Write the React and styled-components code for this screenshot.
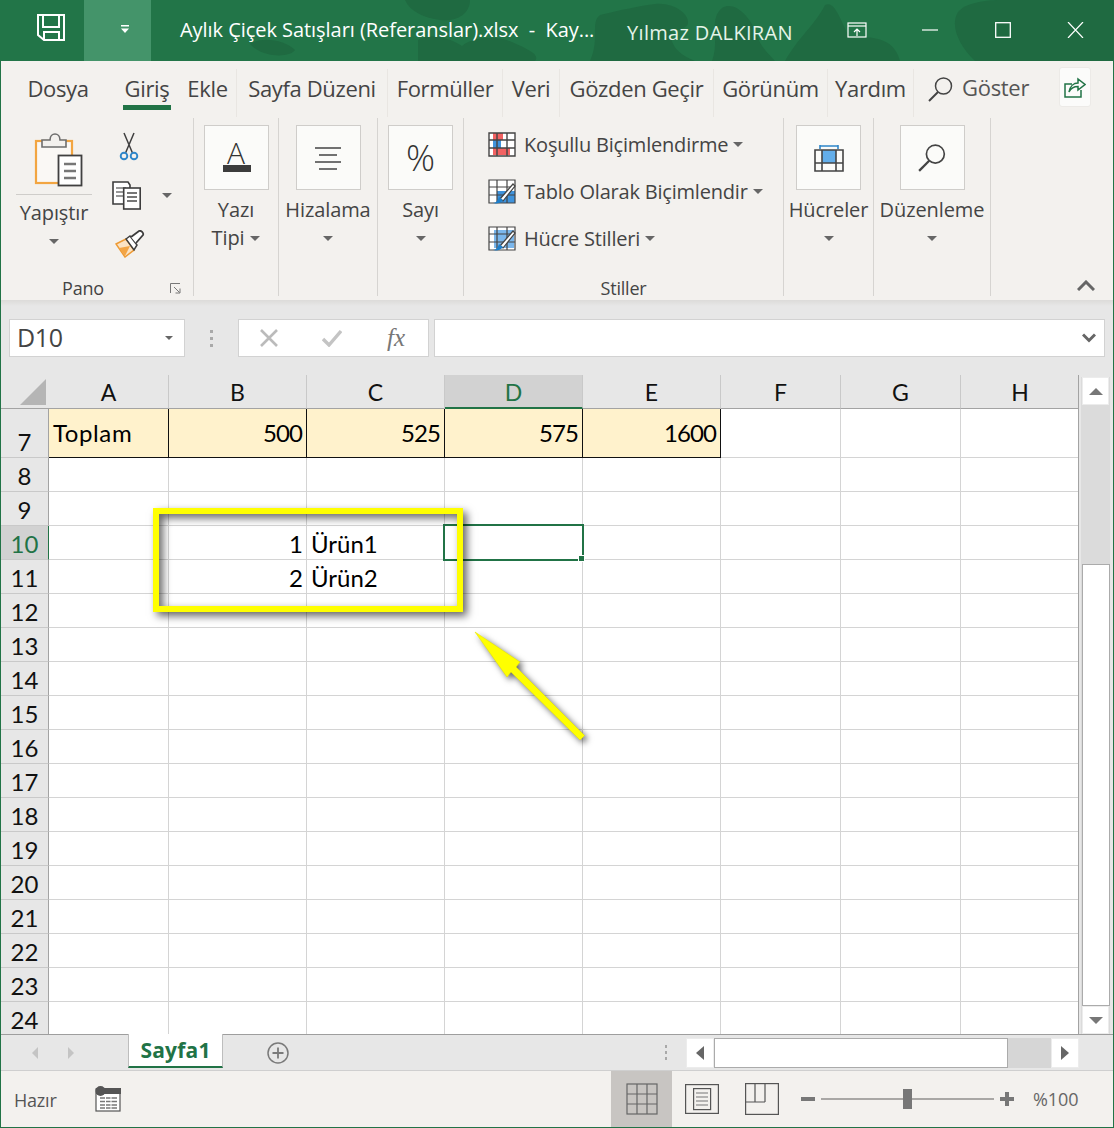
import React from "react";
import styled, { createGlobalStyle } from "styled-components";

const GREEN = "#217346";
const RIBBON = "#f3f1ee";
const UI_FONT = `"Open Sans", "Noto Sans", sans-serif`;
const CELL_FONT = `Lato, "Noto Sans", sans-serif`;

const GlobalStyle = createGlobalStyle`
  html, body {
    margin: 0;
    padding: 0;
    background: #fff;
  }
  * {
    box-sizing: border-box;
  }
`;

const Window = styled.div`
  width: 1114px;
  height: 1128px;
  overflow: hidden;
  font-family: ${UI_FONT};
  color: #444;
`;

/* ---------- title bar ---------- */

const TitleBarRoot = styled.header`
  position: relative;
  height: 61px;
  display: flex;
  align-items: center;
  background: #227548;
  color: #fff;
`;

const TitleClouds = styled.svg`
  position: absolute;
  inset: 0;
  width: 1114px;
  height: 61px;
`;

const SaveButton = styled.div`
  position: relative;
  flex: none;
  width: 84px;
  height: 61px;
  display: flex;
  align-items: center;
  justify-content: center;
  padding: 0 0 6px 18px;
`;

const QuickMenu = styled.div`
  position: relative;
  flex: none;
  width: 67px;
  height: 61px;
  display: flex;
  align-items: center;
  justify-content: center;
  padding: 0 0 2px 15px;
  background: #44946a;
`;

const DocTitle = styled.div`
  position: relative;
  flex: none;
  margin-left: 29px;
  width: 447px;
  font-size: 20px;
  letter-spacing: -0.05px;
  white-space: pre;
  padding-bottom: 2px;
`;

const UserName = styled.div`
  position: relative;
  flex: none;
  width: 204px;
  padding-top: 4px;
  font-size: 20px;
  letter-spacing: 0.33px;
  color: #e4f4e9;
  white-space: nowrap;
`;

const WinButton = styled.div`
  position: relative;
  flex: none;
  width: ${props => props.$w}px;
  display: flex;
  justify-content: center;
  padding: 0 0 2px ${props => props.$pad || 0}px;
`;

/* ---------- tabs ---------- */

const Chrome = styled.div`
  height: 1067px;
  display: flex;
  flex-direction: column;
  border: 1px solid ${GREEN};
  border-top: 0;
`;

const TabRow = styled.nav`
  height: 57px;
  display: flex;
  align-items: flex-start;
  background: ${RIBBON};
`;

const TabItem = styled.div`
  position: relative;
  flex: none;
  width: ${props => props.$w}px;
  height: 48px;
  margin-top: 8px;
  padding-top: 2px;
  display: flex;
  justify-content: center;
  font-size: 22px;
  line-height: 34px;
  letter-spacing: -0.35px;
  white-space: nowrap;
  ${props => props.$sep && "border-right: 1px solid #e9e6e2;"}
`;

const TabUnderline = styled.div`
  position: absolute;
  left: 50%;
  bottom: 7px;
  width: 48px;
  height: 5px;
  margin-left: -24px;
  background: ${GREEN};
`;

const SearchTab = styled.div`
  flex: none;
  width: 143px;
  height: 48px;
  margin-top: 9px;
  padding-left: 14px;
  display: flex;
  align-items: flex-start;
  gap: 9px;
  font-size: 22px;
  line-height: 34px;
  letter-spacing: -0.3px;
  color: #555;
  svg {
    margin-top: 7px;
  }
`;

const ShareButton = styled.div`
  flex: none;
  width: 32px;
  height: 40px;
  margin-top: 6px;
  margin-left: 2px;
  display: flex;
  align-items: center;
  justify-content: center;
  background: #fbfbfa;
  border: 1px solid #eceae7;
  border-radius: 3px;
`;

/* ---------- ribbon ---------- */

const Ribbon = styled.section`
  position: relative;
  height: 182px;
  display: flex;
  align-items: flex-start;
  background: ${RIBBON};
`;

const Group = styled.div`
  flex: none;
  width: ${props => props.$w}px;
  height: 178px;
  display: flex;
  flex-direction: column;
  align-items: center;
  border-right: 1px solid #d6d4d1;
`;

const BigButton = styled.div`
  position: relative;
  width: 65px;
  height: 65px;
  margin-top: 7px;
  display: flex;
  align-items: center;
  justify-content: center;
  background: #fbfbf9;
  border: 1px solid #cfcdca;
`;

const RibbonLabel = styled.div`
  height: 28px;
  display: flex;
  align-items: center;
  gap: 6px;
  font-size: 20px;
  line-height: 28px;
  letter-spacing: -0.1px;
  white-space: nowrap;
  margin-top: ${props => props.$top || 0}px;
`;

const Caret = styled.span`
  display: inline-block;
  width: 0;
  height: 0;
  border-left: ${props => props.$s || 5}px solid transparent;
  border-right: ${props => props.$s || 5}px solid transparent;
  border-top: ${props => props.$s || 5}px solid #666;
`;

const CaretRow = styled.div`
  height: 28px;
  display: flex;
  align-items: center;
  justify-content: center;
`;

const GroupFooter = styled.div`
  margin-top: auto;
  width: 100%;
  height: 16px;
  display: flex;
  align-items: center;
  justify-content: ${props => (props.$start ? "flex-start" : "center")};
  font-size: 18px;
  letter-spacing: -0.2px;
  line-height: 16px;
`;

const ClipBody = styled.div`
  width: 100%;
  display: flex;
`;

const PasteColumn = styled.div`
  width: 76px;
  margin-left: 15px;
  display: flex;
  flex-direction: column;
  align-items: center;
  padding-top: 15px;
  > svg {
    margin-left: 7px;
  }
`;

const PasteDivider = styled.div`
  width: 76px;
  height: 1px;
  margin-top: 7px;
  background: #cfcdca;
`;

const ClipTools = styled.div`
  margin-left: 20px;
  padding-top: 14px;
  display: flex;
  flex-direction: column;
`;

const ClipTool = styled.div`
  height: ${props => props.$h}px;
  display: flex;
  align-items: flex-start;
  gap: 21px;
  padding-left: ${props => props.$pad || 0}px;
  ${Caret} {
    margin-top: 12px;
  }
`;

const PanoLabel = styled.span`
  width: 164px;
  text-align: center;
`;

const Launcher = styled.svg`
  margin-left: 5px;
`;

const StylesBody = styled.div`
  width: 100%;
  padding: 11px 0 0 24px;
  display: flex;
  flex-direction: column;
  gap: 17px;
`;

const StyleRow = styled.div`
  height: 30px;
  display: flex;
  align-items: center;
  gap: 8px;
  font-size: 20px;
  letter-spacing: -0.2px;
  white-space: nowrap;
  ${Caret} {
    margin-left: -3px;
  }
`;

const Collapse = styled.svg`
  position: absolute;
  right: 18px;
  bottom: 9px;
`;

const FontA = styled.span`
  font-size: 30px;
  line-height: 30px;
  margin-top: -10px;
  font-weight: 300;
  color: #333;
`;

const FontBar = styled.span`
  position: absolute;
  left: 18px;
  top: 39px;
  width: 28px;
  height: 7px;
  background: #3c3c3c;
`;

const Percent = styled.span`
  font-size: 36px;
  font-weight: 300;
  line-height: 36px;
  color: #333;
`;

/* ---------- formula bar ---------- */

const FormulaBar = styled.section`
  height: 75px;
  padding: 19px 8px 0 8px;
  display: flex;
  align-items: flex-start;
  background: linear-gradient(#dcdbd9, #e7e7e7 6px);
`;

const FieldBox = styled.div`
  width: ${props => props.$w ? `${props.$w}px` : "auto"};
  flex: ${props => props.$w ? "none" : 1};
  height: 38px;
  display: flex;
  align-items: center;
  background: #fff;
  border: 1px solid #d2d2d2;
  font-size: 25px;
  color: #444;
`;

const NameText = styled.span`
  flex: 1;
  padding: 0 0 2px 7px;
  letter-spacing: -0.4px;
`;

const GripDots = styled.div`
  width: 53px;
  display: flex;
  flex-direction: column;
  align-items: center;
  justify-content: center;
  gap: 4px;
  height: ${props => props.$h || 38}px;
  span {
    width: 3px;
    height: 3px;
    background: #a9a9a9;
  }
`;

const FxGroup = styled(FieldBox)`
  margin-right: 5px;
  justify-content: flex-start;
  padding-left: 21px;
  gap: 44px;
`;

const FxText = styled.span`
  font-family: "Liberation Serif", serif;
  font-style: italic;
  font-size: 25px;
  color: #777;
  margin-left: 1px;
`;

const ChevronWrap = styled.div`
  margin-left: auto;
  padding-right: 8px;
  display: flex;
`;

/* ---------- sheet ---------- */

const SheetArea = styled.section`
  position: relative;
  height: 659px;
  display: flex;
  background: #e7e7e7;
`;

const Grid = styled.div`
  flex: none;
  width: 1078px;
  display: flex;
  flex-direction: column;
  overflow: hidden;
  border-right: 1px solid #a3a3a3;
`;

const HeaderRow = styled.div`
  height: 34px;
  flex: none;
  display: flex;
  background: #e7e7e7;
`;

const Corner = styled.div`
  flex: none;
  width: 48px;
  display: flex;
  align-items: flex-end;
  justify-content: flex-end;
  padding: 0 3px 3px 0;
  border-bottom: 1px solid #a3a3a3;
`;

const ColHead = styled.div`
  flex: none;
  width: ${props => props.$w}px;
  height: 34px;
  padding-top: 1px;
  display: flex;
  align-items: center;
  justify-content: center;
  font-family: ${CELL_FONT};
  font-size: 23px;
  border-right: 1px solid #c9c9c9;
  color: ${props => (props.$active ? GREEN : "#111")};
  background: ${props => (props.$active ? "#d2d2d2" : "transparent")};
  border-bottom: ${props => (props.$active ? `2px solid ${GREEN}` : "1px solid #a3a3a3")};
  &:last-child {
    border-right: 0;
  }
`;

const Row = styled.div`
  height: ${props => props.$h}px;
  flex: none;
  display: flex;
`;

const RowHead = styled.div`
  flex: none;
  width: 48px;
  display: flex;
  align-items: flex-end;
  justify-content: center;
  font-family: ${CELL_FONT};
  font-size: 24px;
  line-height: 31px;
  color: ${props => (props.$active ? GREEN : "#111")};
  background: ${props => (props.$active ? "#d2d2d2" : "#e7e7e7")};
  border-bottom: 1px solid #c9c9c9;
  border-right: 1px solid ${props => (props.$active ? GREEN : "#a3a3a3")};
`;

const Cell = styled.div`
  flex: none;
  width: ${props => props.$w}px;
  display: flex;
  align-items: center;
  font-family: ${CELL_FONT};
  font-size: 24px;
  color: #000;
  padding: ${props => (props.$total ? "0 4px 2px 4px" : "2px 4px 0 4px")};
  letter-spacing: ${props => (props.$right ? "-0.9px" : props.$total ? "0.6px" : "0")};
  background: ${props => (props.$total ? "#fff2cc" : "#fff")};
  justify-content: ${props => (props.$right ? "flex-end" : "flex-start")};
  border-right: 1px solid ${props => (props.$total ? "#111" : "#d4d4d4")};
  border-bottom: 1px solid ${props => (props.$total ? "#111" : "#d4d4d4")};
  &:last-child {
    border-right: 0;
  }
`;

const SelectionBox = styled.div`
  position: absolute;
  left: 442px;
  top: 149px;
  width: 141px;
  height: 37px;
  border: 2px solid ${GREEN};
`;

const FillHandle = styled.div`
  position: absolute;
  right: -3px;
  bottom: -3px;
  width: 7px;
  height: 7px;
  background: ${GREEN};
  border: 1px solid #fff;
`;

const CalloutFrame = styled.div`
  position: absolute;
  left: 152px;
  top: 133px;
  width: 310px;
  height: 104px;
  border: 6px solid #ffff00;
  box-shadow: 4px 4px 8px rgba(0, 0, 0, 0.6), inset 4px 4px 8px rgba(0, 0, 0, 0.6);
`;

const CalloutArrow = styled.svg`
  position: absolute;
  left: 469px;
  top: 250px;
  filter: drop-shadow(3px 3px 3px rgba(0, 0, 0, 0.6));
`;

const VScroll = styled.div`
  width: 29px;
  margin-left: 2px;
  margin-top: 2px;
  display: flex;
  flex-direction: column;
  background: #dbdbdb;
`;

const ScrollBtn = styled.div`
  height: ${props => props.$h}px;
  width: ${props => props.$w || 27}px;
  margin: 0 auto;
  flex: none;
  display: flex;
  align-items: center;
  justify-content: center;
  background: #fff;
  border: 1px solid #ececec;
`;

const ArrowUp = styled.span`
  width: 0;
  height: 0;
  border-left: 7px solid transparent;
  border-right: 7px solid transparent;
  border-bottom: 7px solid #777;
`;

const ArrowDown = styled.span`
  width: 0;
  height: 0;
  border-left: 7px solid transparent;
  border-right: 7px solid transparent;
  border-top: 7px solid #777;
`;

const VThumb = styled.div`
  height: 444px;
  margin-top: 159px;
  width: 28px;
  margin-left: auto;
  margin-right: auto;
  background: #fff;
  border: 1px solid #ababab;
`;

/* ---------- sheet tabs ---------- */

const TabBar = styled.section`
  height: 37px;
  display: flex;
  align-items: flex-start;
  padding-right: 34px;
  background: #e7e7e7;
  border-top: 1px solid #9e9e9e;
  border-bottom: 1px solid #cfcfcf;
`;

const SheetNav = styled.div`
  flex: none;
  width: 127px;
  height: 35px;
  padding-left: 31px;
  display: flex;
  align-items: center;
  gap: 30px;
`;

const NavLeft = styled.span`
  width: 0;
  height: 0;
  border-top: ${props => (props.$dark ? 7 : 6)}px solid transparent;
  border-bottom: ${props => (props.$dark ? 7 : 6)}px solid transparent;
  border-right: ${props => (props.$dark ? "8px solid #666" : "6px solid #c4c4c4")};
`;

const NavRight = styled.span`
  width: 0;
  height: 0;
  border-top: ${props => (props.$dark ? 7 : 6)}px solid transparent;
  border-bottom: ${props => (props.$dark ? 7 : 6)}px solid transparent;
  border-left: ${props => (props.$dark ? "8px solid #666" : "6px solid #c4c4c4")};
`;

const SheetTab = styled.div`
  flex: none;
  width: 95px;
  height: 34px;
  margin-top: -1px;
  padding-bottom: 1px;
  display: flex;
  align-items: center;
  justify-content: center;
  background: #fff;
  border-left: 1px solid #bdbdbd;
  border-right: 1px solid #bdbdbd;
  border-bottom: 2px solid ${GREEN};
  color: ${GREEN};
  font-size: 21px;
  font-weight: 700;
  letter-spacing: 0.2px;
`;

const AddSheet = styled.svg`
  flex: none;
  margin-left: 44px;
  margin-top: 7px;
`;

const TabGrip = styled(GripDots)`
  margin-left: auto;
  width: 41px;
  gap: 3px;
  height: 35px;
  margin-right: 0;
  span {
    width: 2px;
    height: 3px;
  }
`;

const HScroll = styled.div`
  flex: none;
  width: 393px;
  height: 30px;
  margin-top: 3px;
  display: flex;
  background: #d6d6d6;
`;

const HThumb = styled.div`
  width: 294px;
  background: #fff;
  border: 1px solid #ababab;
`;

const HSpacer = styled.div`
  flex: 1;
`;

/* ---------- status bar ---------- */

const StatusBar = styled.footer`
  height: 56px;
  display: flex;
  align-items: center;
  background: ${RIBBON};
  font-size: 18px;
  color: #555;
`;

const StatusText = styled.span`
  margin-left: 13px;
  width: 81px;
  padding-top: 2px;
  letter-spacing: -0.2px;
`;

const ViewButton = styled.div`
  flex: none;
  width: ${props => props.$w}px;
  height: 56px;
  display: flex;
  align-items: center;
  justify-content: center;
  background: ${props => (props.$on ? "#c8c5c2" : "transparent")};
`;

const StatusSpacer = styled.div`
  flex: none;
  width: ${props => props.$w}px;
`;

const ZoomControl = styled.div`
  margin-left: 9px;
  display: flex;
  align-items: center;
  gap: 6px;
`;

const ZoomSign = styled.span`
  position: relative;
  width: 14px;
  height: 14px;
  &::before {
    content: "";
    position: absolute;
    left: 0;
    right: 0;
    top: 5px;
    height: 4px;
    background: #777;
  }
  ${props => props.$plus && `
    &::after {
      content: "";
      position: absolute;
      top: 0;
      bottom: 0;
      left: 5px;
      width: 4px;
      background: #777;
    }
  `}
`;

const ZoomTrack = styled.div`
  position: relative;
  width: 173px;
  height: 2px;
  background: #a9a7a5;
`;

const ZoomThumb = styled.div`
  position: absolute;
  left: 82px;
  top: -9px;
  width: 9px;
  height: 20px;
  background: #777;
`;

const ZoomValue = styled.span`
  margin-left: 19px;
  font-size: 18px;
  letter-spacing: -0.1px;
  color: #666;
`;

/* ---------- icons ---------- */

const SaveIcon = () => (
  <svg width="30" height="30" viewBox="0 0 30 30" fill="none" stroke="#fff" strokeWidth="2">
    <path d="M2 2H28V27H8L2 22Z" />
    <path d="M7 2V14H23V2" />
    <path d="M8 27V19H23V27" />
  </svg>
);

const QuickCaret = () => (
  <svg width="10" height="9" viewBox="0 0 10 9" fill="#fff">
    <rect x="1" y="0" width="8" height="1.5" />
    <path d="M1 3.5H9L5 8Z" />
  </svg>
);

const Clouds = () => (
  <TitleClouds viewBox="0 0 1114 61" fill="#1f6a41">
    <path d="M405 0C410 12 425 18 440 20C455 22 470 15 470 0Z" />
    <path d="M250 44C262 36 285 40 295 50C290 58 262 58 250 44Z" />
    <path d="M418 61V40C430 32 450 38 462 46C470 38 495 34 512 42C530 50 540 55 535 61Z" />
    <path d="M590 61C600 40 590 22 600 15C620 10 640 6 655 4C675 2 690 15 688 24C685 30 675 30 672 30C668 45 680 55 695 61Z" />
    <path d="M712 61C720 40 708 20 722 8C735 0 750 18 755 30C760 48 770 55 775 61Z" />
    <path d="M785 61C800 35 815 25 825 5C835 0 840 20 850 38C880 35 895 42 900 61Z" />
    <path d="M1000 0H1114V61H975C958 45 950 25 958 12C965 3 985 0 1000 0Z" />
  </TitleClouds>
);

const RibbonDisplayIcon = () => (
  <svg width="20" height="16" viewBox="0 0 20 16" fill="none" stroke="#fff" strokeWidth="1.2">
    <rect x="1" y="1" width="18" height="14" />
    <path d="M1 4H19" />
    <path d="M10 14V7M7 10L10 7L13 10" />
  </svg>
);

const MinimizeIcon = () => (
  <svg width="16" height="16" viewBox="0 0 16 16" stroke="#fff" strokeWidth="1.2">
    <path d="M0 8H16" />
  </svg>
);

const MaximizeIcon = () => (
  <svg width="16" height="16" viewBox="0 0 16 16" fill="none" stroke="#fff" strokeWidth="1.3">
    <rect x="0.7" y="0.7" width="14.6" height="14.6" />
  </svg>
);

const CloseIcon = () => (
  <svg width="17" height="16" viewBox="0 0 17 16" stroke="#fff" strokeWidth="1.2">
    <path d="M1 0L16 16M16 0L1 16" />
  </svg>
);

const SearchIcon = ({ size = 25, color = "#444" }) => (
  <svg width={size} height={size} viewBox="0 0 25 25" fill="none" stroke={color} strokeWidth="1.5">
    <circle cx="15.5" cy="9" r="8" />
    <path d="M10 15L1 24" strokeWidth="2" />
  </svg>
);

const ShareIcon = () => (
  <svg width="22" height="22" viewBox="0 0 22 22" fill="none" stroke={GREEN} strokeWidth="1.5">
    <path d="M8 8H1V21H17V14" />
    <path d="M5 16C6 10 10 7 14 7V3L21 8.5L14 14V10.5C10 10.5 7 12 5 16Z" fill="#fbfbfa" />
  </svg>
);

const PasteIcon = () => (
  <svg width="50" height="54" viewBox="0 0 50 54">
    <rect x="3" y="8" width="36" height="42" fill="#faf8f5" stroke="#f2a541" strokeWidth="2.2" />
    <path d="M9 14V7H17C17 -1 27 -1 27 7H33V14Z" fill="#f3f1ee" stroke="#6d6d6d" strokeWidth="1.6" />
    <rect x="25.5" y="22.5" width="23" height="30" fill="#fff" stroke="#404040" strokeWidth="1.8" />
    <path d="M31 31H43M31 38H43M31 45H43" stroke="#777" strokeWidth="2.4" />
  </svg>
);

const ScissorsIcon = () => (
  <svg width="20" height="29" viewBox="0 0 20 29" fill="none">
    <path d="M5 1L13.5 21M15 1L6.5 21" stroke="#3f3f3f" strokeWidth="1.5" />
    <circle cx="5" cy="24" r="3.3" stroke="#2f86c9" strokeWidth="1.9" />
    <circle cx="15" cy="24" r="3.3" stroke="#2f86c9" strokeWidth="1.9" />
  </svg>
);

const CopyIcon = () => (
  <svg width="29" height="29" viewBox="0 0 29 29">
    <path d="M1 1H16L18 4V23H1Z" fill="#fff" stroke="#3d3d3d" strokeWidth="1.6" />
    <path d="M4 7H14M4 11H14M4 15H14" stroke="#777" strokeWidth="1.5" />
    <rect x="11.7" y="7" width="16.5" height="21" fill="#fff" stroke="#3d3d3d" strokeWidth="1.6" />
    <path d="M15 12H25M15 16H25M15 20H25" stroke="#777" strokeWidth="1.8" />
  </svg>
);

const BrushIcon = () => (
  <svg width="30" height="28" viewBox="0 0 30 28">
    <path d="M1 14L11 9L19 20L10 27Z" fill="#fbe3c4" stroke="#ee9b35" strokeWidth="1.5" />
    <path d="M4 18L15 16L10 26Z" fill="#f3a545" />
    <path d="M11 9L15 6L22 15L19 20Z" fill="#fff" stroke="#3d3d3d" strokeWidth="1.5" />
    <path d="M16 7L24 1C26 0 29 3 28 5L21 13" fill="#fff" stroke="#3d3d3d" strokeWidth="1.8" />
  </svg>
);

const LauncherIcon = () => (
  <Launcher width="11" height="11" viewBox="0 0 11 11" fill="none" stroke="#777" strokeWidth="1">
    <path d="M0.5 10V0.5H10" />
    <path d="M4 4L9.5 9.5M10 5.5V10H5.5" />
  </Launcher>
);

const TableGlyph = ({ kind }) => (
  <svg width="28" height="25" viewBox="0 0 28 25">
    <rect x="1" y="1" width="26" height="23" fill="#fff" />
    {kind === "cond" && (
      <>
        <rect x="5" y="1" width="10" height="7" fill="#f26262" />
        <rect x="5" y="8" width="8" height="8" fill="#3f93dc" />
        <rect x="5" y="16" width="17" height="7" fill="#f26262" />
      </>
    )}
    {kind === "table" && <path d="M9 12H27V24H9Z" fill="#3f93dc" />}
    {kind === "cell" && <path d="M6 4H26V22H6Z" fill="#7bb7ec" />}
    <path
      d="M1 1H27V24H1ZM1 8H27M1 16H27M9 1V24M19 1V24"
      fill="none"
      stroke="#444"
      strokeWidth={kind === "cond" ? 1.4 : 1.2}
    />
    {kind !== "cond" && (
      <>
        <path d="M12 20L25 5L27 7L15 22Z" fill="#fff" stroke="#444" strokeWidth="1.2" />
        <path d="M5 24C8 24 10 21 11 18L15 21C13 24 9 25 5 24Z" fill="#1e7fcb" />
      </>
    )}
  </svg>
);

const AlignIcon = () => (
  <svg width="28" height="24" viewBox="0 0 28 24" stroke="#444" strokeWidth="1.6">
    <path d="M1 2H27M5 9H23M1 16H27M5 23H23" />
  </svg>
);

const CellsIcon = () => (
  <svg width="30" height="29" viewBox="0 0 30 29" fill="none">
    <path d="M6 2V6M24 2V6M6 3H24" stroke="#2f86c9" strokeWidth="1.6" />
    <rect x="8" y="7" width="14" height="13" fill="#63aeea" />
    <path d="M1 7H29V28H1ZM1 20H29M8 7V28M22 7V28" stroke="#444" strokeWidth="1.6" />
  </svg>
);

const CancelIcon = () => (
  <svg width="18" height="18" viewBox="0 0 18 18" stroke="#bbb" strokeWidth="2.6">
    <path d="M1 1L17 17M17 1L1 17" />
  </svg>
);

const AcceptIcon = () => (
  <svg width="20" height="18" viewBox="0 0 20 18" fill="none" stroke="#c4c4c4" strokeWidth="3.4">
    <path d="M1 10L7 16L19 2" />
  </svg>
);

const ChevronDown = () => (
  <svg width="14" height="10" viewBox="0 0 14 10" fill="none" stroke="#666" strokeWidth="3">
    <path d="M1 1.5L7 7.5L13 1.5" />
  </svg>
);

const CollapseIcon = () => (
  <Collapse width="18" height="11" viewBox="0 0 18 11" fill="none" stroke="#666" strokeWidth="3">
    <path d="M1 10L9 2L17 10" />
  </Collapse>
);

const PlusCircle = () => (
  <AddSheet width="22" height="22" viewBox="0 0 22 22" fill="none" stroke="#7a7a7a" strokeWidth="1.5">
    <circle cx="11" cy="11" r="10" />
    <path d="M11 5.5V16.5M5.5 11H16.5" strokeWidth="1.8" />
  </AddSheet>
);

const MacroIcon = () => (
  <svg width="27" height="26" viewBox="0 0 27 26">
    <rect x="1" y="3" width="24" height="22" fill="#fff" stroke="#555" strokeWidth="1.2" />
    <rect x="1" y="2" width="25" height="6" fill="#555" />
    <circle cx="5.5" cy="5" r="5" fill="#555" />
    <path d="M5 12H22M5 15.5H22M5 19H22M5 22H22" stroke="#777" strokeWidth="1.4" />
    <path d="M10.5 11V23M16 11V23" stroke="#fff" strokeWidth="1" />
  </svg>
);

const NormalViewIcon = () => (
  <svg width="32" height="32" viewBox="0 0 32 32" fill="none" stroke="#666" strokeWidth="1.2">
    <rect x="1" y="1" width="30" height="30" />
    <path d="M11 1V31M21 1V31M1 11H31M1 21H31" />
  </svg>
);

const PageViewIcon = () => (
  <svg width="34" height="30" viewBox="0 0 34 30" fill="none" stroke="#555" strokeWidth="1.2">
    <rect x="0.6" y="0.6" width="32.8" height="28.8" />
    <rect x="8.6" y="4.6" width="17" height="21" />
    <path d="M11 9H23M11 13H23M11 17H23M11 21H23" stroke="#777" />
  </svg>
);

const BreakViewIcon = () => (
  <svg width="34" height="32" viewBox="0 0 34 32" fill="none" stroke="#555" strokeWidth="1.2">
    <rect x="0.6" y="0.6" width="32.8" height="30.8" />
    <path d="M10 1V19M20 1V19M1 19H20" />
  </svg>
);

const Arrow = () => (
  <CalloutArrow width="120" height="120" viewBox="470 625 120 120">
    <path
      d="M475 632L520 662L516 667L584.5 735.5L580 740L511 672L507 677Z"
      fill="#ffff00"
      stroke="#e8e800"
      strokeWidth="0.6"
    />
  </CalloutArrow>
);

/* ---------- data ---------- */

const COLUMNS = [
  { name: "A", w: 120 },
  { name: "B", w: 138 },
  { name: "C", w: 138 },
  { name: "D", w: 138 },
  { name: "E", w: 138 },
  { name: "F", w: 120 },
  { name: "G", w: 120 },
  { name: "H", w: 118 },
];

const TABS = [
  { label: "Dosya", w: 114 },
  { label: "Giriş", w: 64, active: true },
  { label: "Ekle", w: 58, sep: true },
  { label: "Sayfa Düzeni", w: 151, sep: true },
  { label: "Formüller", w: 115, sep: true },
  { label: "Veri", w: 57, sep: true },
  { label: "Gözden Geçir", w: 154, sep: true },
  { label: "Görünüm", w: 114, sep: true },
  { label: "Yardım", w: 86, sep: true },
];

const ROWS = {
  7: { h: 49, cells: ["Toplam", "500", "525", "575", "1600"], total: true },
  10: { h: 34, cells: ["", "1", "Ürün1"] },
  11: { h: 34, cells: ["", "2", "Ürün2"] },
};

const isNumeric = value => /^\d+$/.test(value);

const SheetRow = ({ number }) => {
  const row = ROWS[number] || { h: 34, cells: [] };
  return (
    <Row $h={row.h}>
      <RowHead $active={number === 10}>{number}</RowHead>
      {COLUMNS.map((col, i) => {
        const value = row.cells[i] || "";
        return (
          <Cell
            key={col.name}
            $w={col.w}
            $total={row.total && i < 5}
            $right={isNumeric(value)}
          >
            {value}
          </Cell>
        );
      })}
    </Row>
  );
};

const LabelGroup = ({ w, label, inlineCaret, children }) => (
  <Group $w={w}>
    <BigButton>{children}</BigButton>
    <RibbonLabel $top={6}>{label}</RibbonLabel>
    {inlineCaret ? (
      <RibbonLabel>
        {inlineCaret}
        <Caret />
      </RibbonLabel>
    ) : (
      <CaretRow>
        <Caret />
      </CaretRow>
    )}
  </Group>
);

const rowNumbers = Array.from({ length: 18 }, (_, i) => i + 7);

export default function App() {
  return (
    <Window>
      <GlobalStyle />
      <TitleBarRoot>
        <Clouds />
        <SaveButton>
          <SaveIcon />
        </SaveButton>
        <QuickMenu>
          <QuickCaret />
        </QuickMenu>
        <DocTitle>Aylık Çiçek Satışları (Referanslar).xlsx  -  Kay...</DocTitle>
        <UserName>Yılmaz DALKIRAN</UserName>
        <WinButton $w={51}>
          <RibbonDisplayIcon />
        </WinButton>
        <WinButton $w={95}>
          <MinimizeIcon />
        </WinButton>
        <WinButton $w={51}>
          <MaximizeIcon />
        </WinButton>
        <WinButton $w={86} $pad={8}>
          <CloseIcon />
        </WinButton>
      </TitleBarRoot>

      <Chrome>
        <TabRow>
          {TABS.map(tab => (
            <TabItem key={tab.label} $w={tab.w} $sep={tab.sep}>
              {tab.label}
              {tab.active && <TabUnderline />}
            </TabItem>
          ))}
          <SearchTab>
            <SearchIcon />
            Göster
          </SearchTab>
          <ShareButton>
            <ShareIcon />
          </ShareButton>
        </TabRow>

        <Ribbon>
          <Group $w={193}>
            <ClipBody>
              <PasteColumn>
                <PasteIcon />
                <PasteDivider />
                <RibbonLabel $top={4}>Yapıştır</RibbonLabel>
                <CaretRow>
                  <Caret />
                </CaretRow>
              </PasteColumn>
              <ClipTools>
                <ClipTool $h={49} $pad={7}>
                  <ScissorsIcon />
                </ClipTool>
                <ClipTool $h={49}>
                  <CopyIcon />
                  <Caret />
                </ClipTool>
                <ClipTool $h={30} $pad={3}>
                  <BrushIcon />
                </ClipTool>
              </ClipTools>
            </ClipBody>
            <GroupFooter $start>
              <PanoLabel>Pano</PanoLabel>
              <LauncherIcon />
            </GroupFooter>
          </Group>

          <LabelGroup w={85} label="Yazı" inlineCaret="Tipi">
            <FontA>A</FontA>
            <FontBar />
          </LabelGroup>
          <LabelGroup w={99} label="Hizalama">
            <AlignIcon />
          </LabelGroup>
          <LabelGroup w={86} label="Sayı">
            <Percent>%</Percent>
          </LabelGroup>

          <Group $w={320}>
            <StylesBody>
              <StyleRow>
                <TableGlyph kind="cond" />
                Koşullu Biçimlendirme
                <Caret />
              </StyleRow>
              <StyleRow>
                <TableGlyph kind="table" />
                Tablo Olarak Biçimlendir
                <Caret />
              </StyleRow>
              <StyleRow>
                <TableGlyph kind="cell" />
                Hücre Stilleri
                <Caret />
              </StyleRow>
            </StylesBody>
            <GroupFooter>Stiller</GroupFooter>
          </Group>

          <LabelGroup w={90} label="Hücreler">
            <CellsIcon />
          </LabelGroup>
          <LabelGroup w={117} label="Düzenleme">
            <SearchIcon size={28} />
          </LabelGroup>
          <CollapseIcon />
        </Ribbon>

        <FormulaBar>
          <FieldBox $w={176}>
            <NameText>D10</NameText>
            <Caret $s={4} />
            <StatusSpacer $w={11} />
          </FieldBox>
          <GripDots>
            <span />
            <span />
            <span />
          </GripDots>
          <FxGroup $w={191}>
            <CancelIcon />
            <AcceptIcon />
            <FxText>fx</FxText>
          </FxGroup>
          <FieldBox>
            <ChevronWrap>
              <ChevronDown />
            </ChevronWrap>
          </FieldBox>
        </FormulaBar>

        <SheetArea>
          <Grid>
            <HeaderRow>
              <Corner>
                <svg width="26" height="26" viewBox="0 0 26 26">
                  <path d="M26 0V26H0Z" fill="#b5b5b5" />
                </svg>
              </Corner>
              {COLUMNS.map(col => (
                <ColHead key={col.name} $w={col.w} $active={col.name === "D"}>
                  {col.name}
                </ColHead>
              ))}
            </HeaderRow>
            {rowNumbers.map(number => (
              <SheetRow key={number} number={number} />
            ))}
          </Grid>
          <VScroll>
            <ScrollBtn $h={28}>
              <ArrowUp />
            </ScrollBtn>
            <VThumb />
            <ScrollBtn $h={28}>
              <ArrowDown />
            </ScrollBtn>
          </VScroll>
          <SelectionBox>
            <FillHandle />
          </SelectionBox>
          <CalloutFrame />
          <Arrow />
        </SheetArea>

        <TabBar>
          <SheetNav>
            <NavLeft />
            <NavRight />
          </SheetNav>
          <SheetTab>Sayfa1</SheetTab>
          <PlusCircle />
          <TabGrip>
            <span />
            <span />
            <span />
          </TabGrip>
          <HScroll>
            <ScrollBtn $h={30} $w={28}>
              <NavLeft $dark />
            </ScrollBtn>
            <HThumb />
            <HSpacer />
            <ScrollBtn $h={30} $w={28}>
              <NavRight $dark />
            </ScrollBtn>
          </HScroll>
        </TabBar>

        <StatusBar>
          <StatusText>Hazır</StatusText>
          <MacroIcon />
          <StatusSpacer $w={489} />
          <ViewButton $w={61} $on>
            <NormalViewIcon />
          </ViewButton>
          <ViewButton $w={60}>
            <PageViewIcon />
          </ViewButton>
          <ViewButton $w={60}>
            <BreakViewIcon />
          </ViewButton>
          <ZoomControl>
            <ZoomSign />
            <ZoomTrack>
              <ZoomThumb />
            </ZoomTrack>
            <ZoomSign $plus />
          </ZoomControl>
          <ZoomValue>%100</ZoomValue>
        </StatusBar>
      </Chrome>
    </Window>
  );
}
